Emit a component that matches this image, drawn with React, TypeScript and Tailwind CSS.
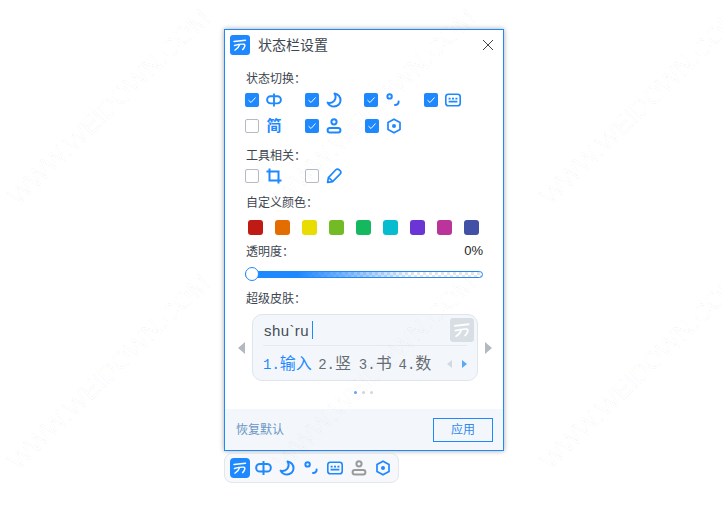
const labelFont = "font-['Liberation_Sans','Noto_Sans_CJK_SC',sans-serif]";

function LogoMark({ className }: { className: string }) {
  return (
    <div className={`flex items-center justify-center rounded-[3px] ${className}`}>
      <svg viewBox="0 0 20 20" className="w-full h-full" fill="none" stroke="currentColor" strokeLinecap="round">
        <path d="M4 6.5 L15.5 5.2" strokeWidth="1.5" />
        <path d="M4.5 10.5 C8 9.5 11 9 14 9.2 C15 9.3 15 10.5 14.6 11.5 C14.2 12.8 13.6 13.8 12.6 14.6" strokeWidth="1.4" />
        <path d="M9.5 9.8 C8.8 12 7.4 14 5 15.2" strokeWidth="1.4" />
      </svg>
    </div>
  );
}

function ZhIcon() {
  return (
    <svg width="17" height="16" viewBox="0 0 17 16" fill="none" stroke="currentColor" strokeWidth="2">
      <rect x="1.2" y="4" width="14.6" height="7.6" rx="3.6" />
      <path d="M8.5 1v14" />
    </svg>
  );
}

function MoonIcon() {
  return (
    <svg width="16" height="16" viewBox="0 0 16 16" fill="none" stroke="currentColor" strokeWidth="2" strokeLinejoin="round">
      <path d="M8.5 1.5 C12 2.2 14.5 5 14.5 8.5 C14.5 12 11.5 14.5 8 14.5 C5 14.5 2.8 13 1.6 10.6 C4 11.2 6.8 10.6 8.4 8.6 C9.8 6.6 9.8 3.6 8.5 1.5 Z" />
    </svg>
  );
}

function PunctIcon() {
  return (
    <svg width="16" height="16" viewBox="0 0 16 16" fill="none" stroke="currentColor" strokeWidth="2" strokeLinecap="round">
      <circle cx="4.6" cy="4.4" r="2.2" />
      <path d="M13.6 9.4 C13.8 11.6 12.4 13 10 13" />
    </svg>
  );
}

function KeyboardIcon() {
  return (
    <svg width="16" height="16" viewBox="0 0 16 16" fill="none">
      <rect x="0.8" y="2.2" width="14.4" height="11.6" rx="2.6" stroke="currentColor" strokeWidth="1.6" />
      <path d="M3.6 5.8h2v1.8h-2zM7 5.8h2v1.8H7zM10.4 5.8h2v1.8h-2zM3.6 8.8h8.8v1.6H3.6z" fill="currentColor" />
    </svg>
  );
}

function PersonIcon() {
  return (
    <svg width="16" height="16" viewBox="0 0 16 16" fill="none" stroke="currentColor" strokeWidth="2">
      <circle cx="8" cy="3.8" r="2.6" />
      <rect x="1.6" y="10" width="12.8" height="4.6" rx="2.3" />
    </svg>
  );
}

function HexIcon() {
  return (
    <svg width="16" height="16" viewBox="0 0 16 16" fill="none">
      <path d="M8 1.2 L14 4.6 V11.4 L8 14.8 L2 11.4 V4.6 Z" stroke="currentColor" strokeWidth="1.7" strokeLinejoin="round" />
      <circle cx="8" cy="8" r="2" fill="currentColor" />
    </svg>
  );
}

function CropIcon() {
  return (
    <svg width="16" height="16" viewBox="0 0 16 16" fill="none" stroke="currentColor" strokeWidth="2">
      <path d="M3.5 0.5V12.5H15.5" />
      <path d="M0.5 3.5H12.5V15.5" />
    </svg>
  );
}

function PenIcon() {
  return (
    <svg width="16" height="16" viewBox="0 0 16 16" fill="none" stroke="currentColor" strokeWidth="1.7" strokeLinejoin="round">
      <path d="M1.6 14.4 L2.4 9.6 L9.6 2 C10.6 1 12.2 1 13.4 2 L14.2 2.8 C15 3.8 15 5.2 14 6.2 L6.6 13.6 Z" />
      <path d="M3 9.8 L6.4 13" />
    </svg>
  );
}

function JianIcon() {
  return <span className="text-[15px] leading-[14px] font-bold">简</span>;
}

function Check({ checked }: { checked: boolean }) {
  if (!checked) {
    return <div className="w-[14px] h-[14px] shrink-0 rounded-[2px] border border-[#b4b9c2] bg-white" />;
  }
  return (
    <div className="w-[14px] h-[14px] shrink-0 rounded-[2px] bg-[#1e88ff] flex items-center justify-center">
      <svg width="10" height="10" viewBox="0 0 10 10" fill="none" stroke="white" strokeWidth="1">
        <path d="M1.5 5.2 L4 7.5 L8.5 2.5" />
      </svg>
    </div>
  );
}

function Option({ checked, children }: { checked: boolean; children: React.ReactNode }) {
  return (
    <div className="w-[60px] h-[14px] flex items-center gap-[7px]">
      <Check checked={checked} />
      <div className="w-4 h-[14px] flex items-center justify-center text-[#1e88ff]">{children}</div>
    </div>
  );
}

function Label({ children, className = '' }: { children: React.ReactNode; className?: string }) {
  return <div className={`h-4 ml-px text-xs leading-[18px] text-[#3d4650] ${className}`}>{children}</div>;
}

function Candidate({ n, text, className }: { n: number; text: string; className: string }) {
  return (
    <span className={className}>
      <span className="text-sm font-['Liberation_Mono']">{n}.</span>
      {text}
    </span>
  );
}

const swatches = ['#c01a14', '#e36d00', '#e8dc00', '#72bb25', '#14b85f', '#08bcd0', '#6b35d6', '#ba3499', '#4250a5'];

const watermarks = [
  'left-[109px] top-[107px]',
  'left-[109px] top-[372px]',
  'left-[375px] top-[107px]',
  'left-[375px] top-[372px]',
  'left-[641px] top-[107px]',
  'left-[641px] top-[372px]',
];

export default function App() {
  return (
    <div className={`relative w-[722px] h-[528px] overflow-hidden bg-white pt-[29px] pl-[224px] ${labelFont}`}>
      <div className="w-[280px] h-[422px] flex flex-col border border-[#1e88ff] bg-white shadow-[0_0_5px_rgba(0,0,0,0.35)]">
        <div className="h-[30px] shrink-0 flex items-center pl-[5px] pr-[9px]">
          <LogoMark className="w-5 h-5 bg-[#1e88ff] text-white" />
          <div className="ml-2 flex-1 text-sm text-[#3d4650]">状态栏设置</div>
          <svg width="12" height="12" viewBox="0 0 12 12" stroke="#444" strokeWidth="1">
            <path d="M1 1L11 11M11 1L1 11" />
          </svg>
        </div>

        <div className="pl-5 pr-5 flex flex-col">
          <Label className="mt-[10px]">状态切换：</Label>
          <div className="mt-[7px] flex">
            <Option checked><ZhIcon /></Option>
            <Option checked><MoonIcon /></Option>
            <Option checked><PunctIcon /></Option>
            <Option checked><KeyboardIcon /></Option>
          </div>
          <div className="mt-3 flex">
            <Option checked={false}><JianIcon /></Option>
            <Option checked><PersonIcon /></Option>
            <Option checked><HexIcon /></Option>
          </div>

          <Label className="mt-[14px]">工具相关：</Label>
          <div className="mt-[6px] flex">
            <Option checked={false}><CropIcon /></Option>
            <Option checked={false}><PenIcon /></Option>
          </div>

          <Label className="mt-[11px]">自定义颜色：</Label>
          <div className="mt-[10px] ml-[3px] flex gap-3">
            {swatches.map((c) => (
              <div key={c} className="w-[15px] h-[15px] rounded-[3px]" style={{ backgroundColor: c }} />
            ))}
          </div>

          <div className="mt-2 flex justify-between items-center w-[238px]">
            <Label>透明度：</Label>
            <span className="text-[13px] leading-4 text-[#222]">0%</span>
          </div>

          <div className="relative mt-2 h-[14px] w-[238px] flex items-center">
            <div className="w-full h-[7px] rounded-full border border-[#1e88ff] bg-[repeating-conic-gradient(#e4e4e4_0_25%,#ffffff_0_50%)] bg-[length:6px_6px] overflow-hidden">
              <div className="w-[170px] h-full bg-gradient-to-r from-[#1e88ff] via-[#1e88ff] via-30% to-transparent" />
            </div>
            <div className="absolute left-0 top-0 w-[14px] h-[14px] rounded-full border-[1.5px] border-[#1e88ff] bg-white" />
          </div>

          <Label className="mt-[9px]">超级皮肤：</Label>

          <div className="mt-2 flex items-center -ml-[7px] w-[254px]">
            <div className="w-0 h-0 border-y-[6px] border-y-transparent border-r-[7px] border-r-[#b3b9bf]" />
            <div className="ml-[7px] w-[226px] h-[67px] rounded-[10px] border border-[#dfe5ea] bg-[#f3f7fb] px-[10px] flex flex-col">
              <div className="h-[31px] flex items-center border-b border-[#e6eaee] relative">
                <span className="ml-px text-[15px] tracking-[0.4px] text-[#454c54] leading-none">shu`ru</span>
                <span className="ml-[3px] w-px h-[18px] bg-[#1e88ff]" />
                <LogoMark className="absolute -right-[7px] top-[3px] w-6 h-6 bg-[#d8dfe4] text-white" />
              </div>
              <div className="flex-1 pt-px flex items-center text-base text-[#666c73]">
                <Candidate n={1} text="输入" className="w-[57px] text-[#1e88ff]" />
                <Candidate n={2} text="竖" className="w-[42px]" />
                <Candidate n={3} text="书" className="w-[41px]" />
                <Candidate n={4} text="数" className="w-[47px]" />
                <div className="ml-[3px] w-0 h-0 border-y-[4px] border-y-transparent border-r-[5px] border-r-[#d3d9de]" />
                <div className="ml-[10px] w-0 h-0 border-y-[4px] border-y-transparent border-l-[5px] border-l-[#5aa9f5]" />
              </div>
            </div>
            <div className="ml-[7px] w-0 h-0 border-y-[6px] border-y-transparent border-l-[7px] border-l-[#b3b9bf]" />
          </div>

          <div className="mt-[10px] ml-[109px] flex gap-[5px]">
            <div className="w-[3px] h-[3px] rounded-full bg-[#5aa9f5]" />
            <div className="w-[3px] h-[3px] rounded-full bg-[#d3d7db]" />
            <div className="w-[3px] h-[3px] rounded-full bg-[#d3d7db]" />
          </div>
        </div>

        <div className="mt-auto h-[41px] shrink-0 bg-[#f3f7fb] flex items-center justify-between pl-[11px] pr-[10px]">
          <span className="text-xs text-[#6a96c4]">恢复默认</span>
          <div className="w-[60px] h-6 border border-[#1e88ff] flex items-center justify-center text-xs text-[#2f8af0]">应用</div>
        </div>
      </div>

      <div className="mt-[2px] w-[175px] h-[30px] rounded-lg border border-[#e3e6ea] bg-[#f6f8fb] flex items-center pl-[5px]">
        <LogoMark className="w-5 h-5 bg-[#1e88ff] text-white rounded-[4px]" />
        <div className="ml-[5px] flex gap-2 text-[#1e88ff]">
          <div className="w-4 h-4"><ZhIcon /></div>
          <div className="w-4 h-4"><MoonIcon /></div>
          <div className="w-4 h-4"><PunctIcon /></div>
          <div className="w-4 h-4"><KeyboardIcon /></div>
          <div className="w-4 h-4 text-[#9a9a9a]"><PersonIcon /></div>
          <div className="w-4 h-4"><HexIcon /></div>
        </div>
      </div>

      {watermarks.map((pos) => (
        <div
          key={pos}
          className={`absolute ${pos} -translate-x-1/2 -translate-y-1/2 -rotate-[44deg] whitespace-nowrap pointer-events-none font-['Liberation_Sans'] text-[25px] text-transparent [-webkit-text-stroke:1px_rgba(0,0,0,0.035)]`}
        >
          WWW.WEIDOWN.COM
        </div>
      ))}
    </div>
  );
}
